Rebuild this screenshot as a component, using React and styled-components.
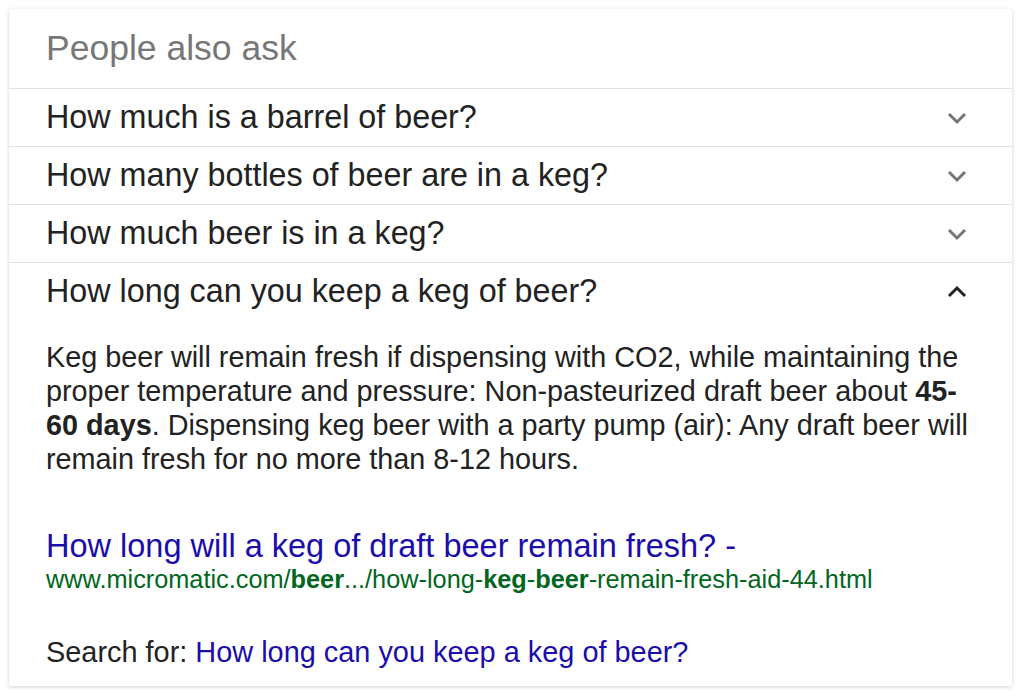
import React from 'react'
import styled, { createGlobalStyle } from 'styled-components'

const Global = createGlobalStyle`
  body {
    margin: 0;
    background: #fff;
    font-family: "Liberation Sans", Arial, sans-serif;
  }
`

const Page = styled.div`
  padding: 9px 12px 10px 9px;
`

const Card = styled.div`
  background: #fff;
  box-shadow: 0 1px 4px rgba(0, 0, 0, 0.18);
  border-radius: 2px;
`

const Header = styled.div`
  height: 79px;
  display: flex;
  align-items: center;
  padding: 0 37px;
  font-size: 35.5px;
  color: #777;
  border-bottom: 1px solid #e2e2e2;
`

const Row = styled.div`
  height: 57px;
  display: flex;
  align-items: center;
  justify-content: space-between;
  padding: 0 44px 0 37px;
  font-size: 32.3px;
  color: #222;
  border-bottom: ${p => (p.last ? 'none' : '1px solid #e2e2e2')};
`

const Chevron = ({ up }) => (
  <svg width="22" height="14" viewBox="0 0 22 14">
    <path
      d={up ? 'M3 11 L11 3 L19 11' : 'M3 3 L11 11 L19 3'}
      fill="none"
      stroke={up ? '#222' : '#757575'}
      strokeWidth="3"
    />
  </svg>
)

const Answer = styled.div`
  padding: 20px 37px 0 37px;
  font-size: 28.8px;
  line-height: 34px;
  color: #222;

  b {
    line-height: 1;
  }
`

const Source = styled.div`
  padding: 52px 37px 0 37px;
`

const Title = styled.a`
  display: block;
  font-size: 32.5px;
  line-height: 36px;
  color: #1a0dab;
  text-decoration: none;
`

const Url = styled.div`
  font-size: 25.3px;
  line-height: 30px;
  color: #006621;
`

const Search = styled.div`
  padding: 41px 37px 17px 37px;
  font-size: 28.9px;
  line-height: 34px;
  color: #222;
`

const SearchLink = styled.a`
  color: #1a0dab;
  text-decoration: none;
`

const questions = [
  'How much is a barrel of beer?',
  'How many bottles of beer are in a keg?',
  'How much beer is in a keg?',
]

export default function App() {
  return (
    <Page>
      <Global />
      <Card>
        <Header>People also ask</Header>
        {questions.map(q => (
          <Row key={q}>
            {q}
            <Chevron />
          </Row>
        ))}
        <Row last>
          How long can you keep a keg of beer?
          <Chevron up />
        </Row>
        <Answer>
          Keg beer will remain fresh if dispensing with CO2, while maintaining the proper
          temperature and pressure: Non-pasteurized draft beer about <b>45-60 days</b>.
          Dispensing keg beer with a party pump (air): Any draft beer will remain fresh for
          no more than 8-12 hours.
        </Answer>
        <Source>
          <Title href="#">How long will a keg of draft beer remain fresh? -</Title>
          <Url>
            www.micromatic.com/<b>beer</b>.../how-long-<b>keg</b>-<b>beer</b>-remain-fresh-aid-44.html
          </Url>
        </Source>
        <Search>
          Search for: <SearchLink href="#">How long can you keep a keg of beer?</SearchLink>
        </Search>
      </Card>
    </Page>
  )
}
